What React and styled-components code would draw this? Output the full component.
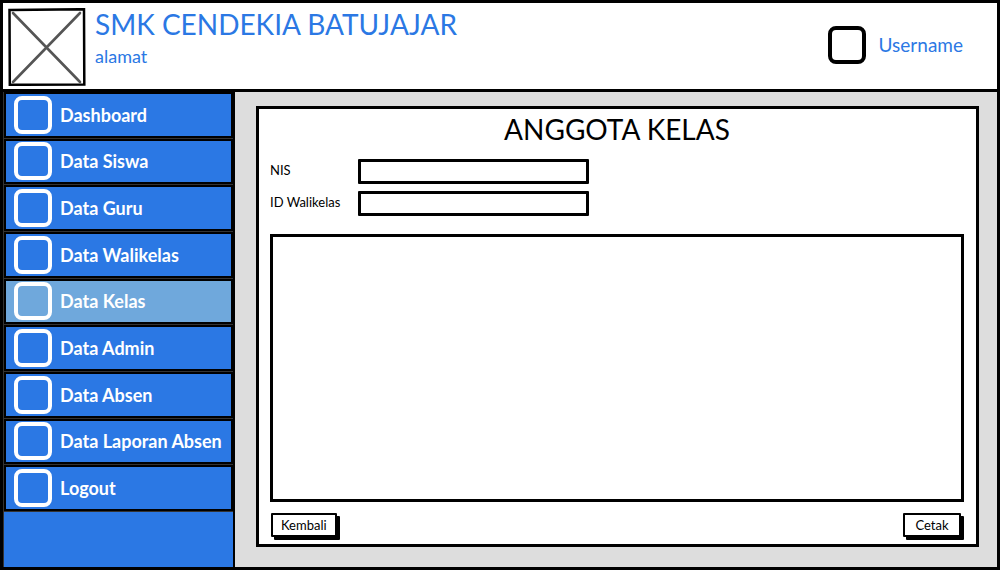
import React from "react";
import styled, { createGlobalStyle } from "styled-components";

const ink = "#000000";
const blue = "#2b78e4";
const lightBlue = "#6fa8dc";

const GlobalStyle = createGlobalStyle`
  *, *::before, *::after { box-sizing: border-box; }
  body {
    margin: 0;
    background: ${ink};
    color: ${ink};
    font-family: Lato, "Open Sans", sans-serif;
  }
`;

const Page = styled.div`
  min-height: 100vh;
  display: flex;
  flex-direction: column;
  border: 3px solid ${ink};
`;

const Header = styled.header`
  display: flex;
  align-items: flex-start;
  padding: 5px 34px 3px 5px;
  background: #ffffff;
  border-bottom: 3px solid ${ink};
`;

const Logo = styled.svg`
  display: block;
  width: 78px;
  height: 78px;
  flex: none;
`;

const Brand = styled.div`
  flex: 1;
  padding-left: 9px;
  color: ${blue};
`;

const SchoolName = styled.p`
  margin: 0;
  font-size: 28px;
  line-height: 32px;
`;

const Address = styled.p`
  margin: 0;
  font-size: 18px;
  line-height: 32px;
`;

const User = styled.div`
  display: flex;
  align-items: center;
  align-self: center;
  gap: 13px;
  padding-bottom: 4px;
  color: ${blue};
  font-size: 19px;
  line-height: 24px;
`;

const IconBox = styled.span`
  flex: none;
  width: 38px;
  height: 38px;
  border: 4px solid ${(p) => p.$color};
  border-radius: 8px;
`;

const Body = styled.div`
  flex: 1;
  display: grid;
  grid-template-columns: 232px 1fr;
`;

const Sidebar = styled.nav`
  background: ${blue};
  border-left: 1px solid #333333;
  border-right: 2px solid ${ink};
`;

const Menu = styled.ul`
  list-style: none;
  margin: 0;
  padding: 0;
  height: 420px;
  display: grid;
  grid-template-rows: repeat(9, 1fr);
`;

const MenuItem = styled.li`
  display: flex;
  border-bottom: 1px solid #333333;
`;

const MenuLink = styled.a`
  flex: 1;
  display: flex;
  align-items: center;
  gap: 8px;
  padding-left: 8px;
  border: 2px solid ${ink};
  background: ${(p) => (p.$active ? lightBlue : blue)};
  color: #ffffff;
  font-size: 18px;
  font-weight: 700;
  line-height: 24px;
  text-decoration: none;
  white-space: nowrap;
`;

const Main = styled.main`
  display: flex;
  padding: 14px 18px 20px 21px;
  background: #dddddd;
`;

const Card = styled.form`
  flex: 1;
  display: flex;
  flex-direction: column;
  padding: 4px 12px 7px 11px;
  background: #ffffff;
  border: 3px solid ${ink};
`;

const Title = styled.h1`
  margin: 0 0 14px;
  font-size: 28px;
  font-weight: 400;
  line-height: 32px;
  text-align: center;
`;

const Fields = styled.div`
  display: grid;
  gap: 7px;
  margin-bottom: 18px;
`;

const Field = styled.div`
  display: grid;
  grid-template-columns: 88px 231px;
  align-items: center;
`;

const Label = styled.label`
  padding-bottom: 3px;
  font-size: 13px;
  line-height: 16px;
`;

const TextInput = styled.input`
  width: 100%;
  height: 25px;
  padding: 0 6px;
  border: 3px solid ${ink};
  border-radius: 1px;
  background: #ffffff;
  font: inherit;
  font-size: 13px;
`;

const ListArea = styled.section`
  flex: 1;
  border: 3px solid ${ink};
  margin-bottom: 11px;
`;

const Actions = styled.div`
  display: flex;
  justify-content: space-between;
  padding: 0 3px 0 1px;
`;

const Button = styled.button`
  min-width: 58px;
  height: 24px;
  padding: 0 8px 1px;
  border: 2px solid ${ink};
  border-radius: 1px;
  background: #ffffff;
  box-shadow: 3px 3px 0 ${ink};
  color: ${ink};
  font-family: inherit;
  font-size: 13px;
  line-height: 16px;
`;

const menu = [
  "Dashboard",
  "Data Siswa",
  "Data Guru",
  "Data Walikelas",
  "Data Kelas",
  "Data Admin",
  "Data Absen",
  "Data Laporan Absen",
  "Logout",
];

export default function App() {
  return (
    <Page>
      <GlobalStyle />
      <Header>
        <Logo viewBox="0 0 78 78" role="img" aria-label="Logo">
          <path d="M1.5 2 L76 1.2 L76.3 76.5 L1.8 76.8 Z" fill="#fff" stroke="#000" strokeWidth="2.5" />
          <path d="M5 5 L72 74 M72 5 L5 74" stroke="#555" strokeWidth="2.6" strokeLinecap="round" />
        </Logo>
        <Brand>
          <SchoolName>SMK CENDEKIA BATUJAJAR</SchoolName>
          <Address>alamat</Address>
        </Brand>
        <User>
          <IconBox $color={ink} />
          <span>Username</span>
        </User>
      </Header>
      <Body>
        <Sidebar aria-label="Menu">
          <Menu>
            {menu.map((name) => (
              <MenuItem key={name}>
                <MenuLink
                  href="#"
                  $active={name === "Data Kelas"}
                  aria-current={name === "Data Kelas" ? "page" : undefined}
                >
                  <IconBox $color="#ffffff" />
                  {name}
                </MenuLink>
              </MenuItem>
            ))}
          </Menu>
        </Sidebar>
        <Main>
          <Card>
            <Title>ANGGOTA KELAS</Title>
            <Fields>
              <Field>
                <Label htmlFor="nis">NIS</Label>
                <TextInput id="nis" type="text" />
              </Field>
              <Field>
                <Label htmlFor="wali">ID Walikelas</Label>
                <TextInput id="wali" type="text" />
              </Field>
            </Fields>
            <ListArea aria-label="Anggota kelas" />
            <Actions>
              <Button type="button">Kembali</Button>
              <Button type="button">Cetak</Button>
            </Actions>
          </Card>
        </Main>
      </Body>
    </Page>
  );
}
